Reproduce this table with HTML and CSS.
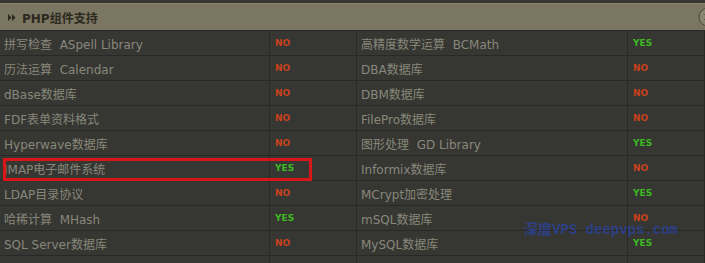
FILE: index.html
```html
<!DOCTYPE html>
<html lang="zh">
<head>
<meta charset="utf-8">
<title>PHP组件支持</title>
<link rel="stylesheet" href="styles.css">
</head>
<body>
<div class="panel">
  <div class="head">
    <svg class="arrows" width="8" height="7" viewBox="0 0 8 7"><path d="M0 0 L3.5 3.5 L0 7 Z M4 0 L7.5 3.5 L4 7 Z" fill="#2c2a1e"/></svg>
    <span class="title">PHP组件支持</span>
    <svg class="toggle" width="20" height="20" viewBox="0 0 20 20"><circle cx="10" cy="10" r="9" fill="#8a866f" stroke="#4a483c" stroke-width="1"/><path d="M6 8 L10 4.5 L14 8 Z M6 12 L10 15.5 L14 12 Z" fill="#2c2a1e"/></svg>
  </div>
  <div class="grid">
    <div class="c name">拼写检查&nbsp; ASpell Library</div><div class="c no">NO</div><div class="c name">高精度数学运算&nbsp; BCMath</div><div class="c yes">YES</div>
    <div class="c name">历法运算&nbsp; Calendar</div><div class="c no">NO</div><div class="c name">DBA数据库</div><div class="c no">NO</div>
    <div class="c name">dBase数据库</div><div class="c no">NO</div><div class="c name">DBM数据库</div><div class="c no">NO</div>
    <div class="c name">FDF表单资料格式</div><div class="c no">NO</div><div class="c name">FilePro数据库</div><div class="c no">NO</div>
    <div class="c name">Hyperwave数据库</div><div class="c no">NO</div><div class="c name">图形处理&nbsp; GD Library</div><div class="c yes">YES</div>
    <div class="c name">IMAP电子邮件系统</div><div class="c yes">YES</div><div class="c name">Informix数据库</div><div class="c no">NO</div>
    <div class="c name">LDAP目录协议</div><div class="c no">NO</div><div class="c name">MCrypt加密处理</div><div class="c yes">YES</div>
    <div class="c name">哈稀计算&nbsp; MHash</div><div class="c yes">YES</div><div class="c name">mSQL数据库</div><div class="c no">NO</div>
    <div class="c name">SQL Server数据库</div><div class="c no">NO</div><div class="c name">MySQL数据库</div><div class="c yes">YES</div>
    <div class="c name"></div><div class="c"></div><div class="c name"></div><div class="c"></div>
  </div>
  <div class="mark"></div>
  <div class="watermark">深度VPS deepvps.com</div>
</div>
</body>
</html>
```
FILE: styles.css
```css
html, body {
  margin: 0;
  padding: 0;
  background: #363633;
  overflow: hidden;
}
.panel {
  position: relative;
  width: 705px;
  height: 263px;
  padding-top: 3px;
  box-sizing: border-box;
  background: #363633;
  overflow: hidden;
}
.head {
  background: #7a7662;
  border-top: 1px solid #8a8670;
  border-bottom: 1px solid #2a2a27;
  box-sizing: border-box;
  height: 28px;
  display: flex;
  align-items: center;
  padding-left: 8px;
}
.arrows {
  margin-right: 6px;
}
.title {
  font-family: "DejaVu Sans", "Noto Sans CJK SC", sans-serif;
  font-weight: bold;
  font-size: 12px;
  color: #2c2a1e;
  flex: 1;
}
.toggle {
  margin-right: -13px;
}
.grid {
  display: grid;
  grid-template-columns: 270px 87px 271px 77px;
  grid-auto-rows: 25px;
}
.c {
  border-right: 1px solid #282826;
  border-bottom: 1px solid #282826;
  display: flex;
  align-items: center;
  padding-left: 5px;
  white-space: nowrap;
  overflow: hidden;
}
.name {
  font-family: "DejaVu Sans", "Noto Sans CJK SC", sans-serif;
  font-size: 12px;
  color: #88887a;
  padding-left: 4px;
}
.no, .yes {
  font-family: "DejaVu Sans", sans-serif;
  font-weight: bold;
  font-size: 9px;
}
.no { color: #c8421c; }
.yes { color: #3db822; }
.mark {
  position: absolute;
  left: 3px;
  top: 158px;
  width: 309px;
  height: 23px;
  box-sizing: border-box;
  border: 3px solid #d8161a;
}
.watermark {
  position: absolute;
  left: 524px;
  top: 218px;
  font-family: "Liberation Mono", "Noto Sans CJK SC", monospace;
  font-size: 14px;
  font-weight: bold;
  color: rgba(40, 72, 190, 0.6);
  white-space: nowrap;
}
```
